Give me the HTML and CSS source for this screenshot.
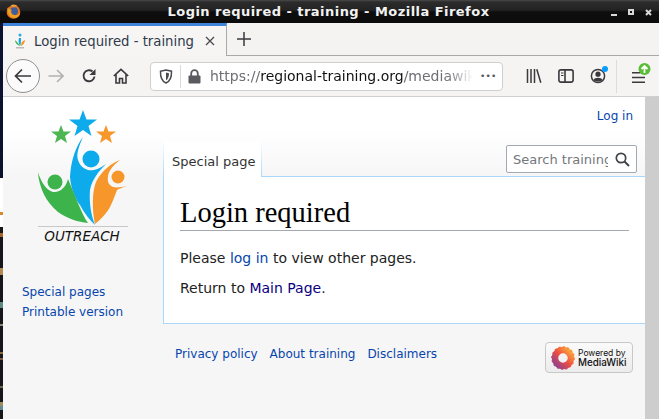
FILE: index.html
```html
<!DOCTYPE html>
<html lang="en">
<head>
<meta charset="utf-8">
<title>Login required - training - Mozilla Firefox</title>
<link rel="stylesheet" href="styles.css">
</head>
<body>
<div class="window">
  <header class="titlebar">
    <svg class="ff-logo" width="15" height="15" viewBox="0 0 16 16"><circle cx="8" cy="8.500" r="7.300" fill="#e8741c"/><circle cx="8.600" cy="7.600" r="4.200" fill="#3d5f9e"/><path d="M1.500 4c0 5 2 11 7.500 11 3 0 5.500-2 6-6C13 12 10 12.500 8 11.500 5.500 10.500 5 8 6 6 4 6 3 5 1.500 4z" fill="#f0a020"/><path d="M5 1.500c2-1.500 6-1 8 1.500-2-1-4-.5-5 .5z" fill="#e9a23a"/></svg>
    <div class="title">Login required - training - Mozilla Firefox</div>
    <div class="winbtns">
      <span class="wb-min"></span><span class="wb-max"></span>
      <svg width="7" height="7" viewBox="0 0 7 7"><path d="M1 1l5 5M6 1L1 6" stroke="#d8d8d8" stroke-width="2"/></svg>
    </div>
  </header>
  <div class="frame">
    <div class="tabbar">
      <div class="tab">
        <svg class="favicon" width="14" height="16" viewBox="0 0 14 16"><circle cx="7" cy="2" r="1.500" fill="#2aa7e0"/><path d="M6 5c-1 3 0 6 1 8 1-1 1-5 1-8z" fill="#1ba6e6"/><path d="M2 7c0 3 2 5 5 6-1-2-3-4-5-6z" fill="#3db54a"/><path d="M12 7c-3 1-4 3-4 6 2-1 4-3 4-6z" fill="#f7941d"/><rect x="3" y="14" width="8" height="1.500" fill="#bbb"/></svg>
        <span class="tab-label">Login required - training</span>
        <svg class="tab-close" width="10" height="10" viewBox="0 0 10 10"><path d="M1 1l8 8M9 1L1 9" stroke="#4a4a4f" stroke-width="1.300"/></svg>
      </div>
      <div class="newtab"><svg width="14" height="14" viewBox="0 0 14 14"><path d="M7 0v14M0 7h14" stroke="#3a3a3e" stroke-width="1.500"/></svg></div>
    </div>
    <nav class="navbar">
      <div class="backbtn"><svg width="18" height="16" viewBox="0 0 18 16"><path d="M8 1.500 1.500 8 8 14.500M2 8h15" fill="none" stroke="#3a3a3e" stroke-width="1.700"/></svg></div>
      <svg class="ic-forward" width="16" height="14" viewBox="0 0 16 14"><path d="M9 1l6 6-6 6M14.500 7H.5" fill="none" stroke="#b1b1b3" stroke-width="1.600"/></svg>
      <svg class="ic-reload" width="16" height="16" viewBox="0 0 16 16"><path d="M13.500 8.500A5.500 5.500 0 1 1 11.500 3.500" fill="none" stroke="#3a3a3e" stroke-width="1.900"/><path d="M14.500 1v6h-6z" fill="#3a3a3e"/></svg>
      <svg class="ic-home" width="16" height="16" viewBox="0 0 16 16"><path d="M.8 8 8 1.300 15.200 8M3 6.500V15h3.500v-4.500h3V15H13V6.500" fill="none" stroke="#3a3a3e" stroke-width="1.600"/></svg>
      <div class="urlbar">
        <svg class="ic-shield" width="14" height="15" viewBox="0 0 14 15"><path d="M1.500 2.200 7 1l5.500 1.200c.2 5-1 9.800-5.500 11.800-4.500-2-5.700-6.800-5.500-11.800z" fill="none" stroke="#4a4a4f" stroke-width="1.500"/><path d="M7 3.500 10 4.200C10 7.500 9 10 7 11.500z" fill="#4a4a4f"/></svg>
        <span class="url-sep"></span>
        <svg class="ic-lock" width="13" height="15" viewBox="0 0 13 15"><path d="M3.200 7V4.500a3.300 3.300 0 0 1 6.600 0V7" fill="none" stroke="#5b5b5f" stroke-width="1.800"/><rect x=".5" y="6.500" width="12" height="8" rx="1" fill="#5b5b5f"/></svg>
        <span class="url"><span class="url-dim">https://</span>regional-training.org<span class="url-dim">/mediawiki</span></span>
        <span class="url-more">•••</span>
      </div>
      <div class="nav-right">
        <svg class="ic-lib" width="16" height="14" viewBox="0 0 16 14"><path d="M1.500 0v14M5 0v14M8.500 0v14M10.800.3l4 13.400" fill="none" stroke="#3a3a3e" stroke-width="1.500"/></svg>
        <svg class="ic-side" width="16" height="14" viewBox="0 0 16 14"><rect x=".9" y=".9" width="14.200" height="12.200" rx="2" fill="none" stroke="#3a3a3e" stroke-width="1.600"/><path d="M7 1v12" stroke="#3a3a3e" stroke-width="1.600"/><path d="M3 4h2.500M3 6.500h2.500" stroke="#3a3a3e"/></svg>
        <svg class="ic-acct" width="19" height="18" viewBox="0 0 19 18"><circle cx="8" cy="10" r="6.600" fill="none" stroke="#3a3a3e" stroke-width="1.500"/><circle cx="8" cy="8.200" r="2.600" fill="#3a3a3e"/><path d="M3.500 14c1-3 8-3 9 0-2 2-7 2-9 0z" fill="#3a3a3e"/><circle cx="15" cy="3" r="3" fill="#0a9dff"/></svg>
        <span class="nav-sep"></span>
        <svg class="ic-menu" width="20" height="22" viewBox="0 0 20 22"><path d="M0 9.800h8M0 14.500h13M0 19.200h13" stroke="#3a3a3e" stroke-width="1.600"/><circle cx="12.500" cy="6" r="6" fill="#57bd35"/><path d="M12.500 10V3M9.500 6l3-3 3 3" fill="none" stroke="#fff" stroke-width="1.800"/></svg>
      </div>
    </nav>
    <div class="viewport">
      <div class="page">
        <aside class="sidebar">
          <svg class="logo" width="96" height="134" viewBox="0 0 96 134">
            <polygon points="45,0 48.500,9.500 59,9.500 50.500,16 53.500,26 45,20 36.500,26 39.500,16 31,9.500 41.500,9.500" fill="#0dabec"/>
            <polygon points="23,15 25.500,21.500 33,21.500 27,26 29,33 23,29 17,33 19,26 13,21.500 20.500,21.500" fill="#4eb553"/>
            <polygon points="68,15 70.500,21.500 78,21.500 72,26 74,33 68,29 62,33 64,26 58,21.500 65.500,21.500" fill="#f7962a"/>
            <circle cx="53" cy="49" r="8.500" fill="#0dabec"/>
            <circle cx="17" cy="72" r="7.500" fill="#3cb44b"/>
            <circle cx="80" cy="67" r="6.500" fill="#f7962a"/>
            <path d="M45 27C38 36 33 50 32 67 33 80 38 90 42 95 46 103 52 110 57 115 53 105 51 92 52 80 54 70 60 62 68 54 60 60 54 61 50 60 45 58 42 56 40 50 38 44 41 36 45 27z" fill="#0dabec"/>
            <path d="M0 62C1 78 8 92 20 102 30 109 40 112 50 113 44 105 37 85 30 69 28 77 22 83 15 82 8 80 3 72 0 62z" fill="#3cb44b"/>
            <path d="M82 50C74 53 64 60 58 72 54 82 54 100 57 114 64 108 69 103 72 97 75 91 77 85 79 80 82 78 86 77 89 76 84 77 79 78 75 77 71 75 69 72 70 67 70 62 74 56 82 50z" fill="#f7962a"/>
            <rect x="0" y="116" width="90" height="1" fill="#c8c8c8"/>
            <text class="logo-text" x="44" y="131" text-anchor="middle">OUTREACH</text>
          </svg>
          <ul class="tools">
            <li><a href="#">Special pages</a></li>
            <li><a href="#">Printable version</a></li>
          </ul>
        </aside>
        <div class="main">
          <div class="personal"><a href="#">Log in</a></div>
          <div class="tabs-row">
            <div class="special-tab">Special page</div>
            <div class="search"><span class="search-text">Search training</span>
              <svg width="15" height="15" viewBox="0 0 15 15"><circle cx="6" cy="6" r="4.700" fill="none" stroke="#404448" stroke-width="1.700"/><path d="M9.500 9.500 14 14" stroke="#404448" stroke-width="2"/></svg>
            </div>
          </div>
          <main class="content">
            <h1>Login required</h1>
            <p>Please <a href="#">log in</a> to view other pages.</p>
            <p>Return to <a class="visited" href="#">Main Page</a>.</p>
          </main>
          <footer class="footer">
            <div class="foot-links"><a href="#">Privacy policy</a><a href="#">About training</a><a href="#">Disclaimers</a></div>
            <div class="badge">
              <svg width="24" height="24" viewBox="0 0 24 24"><defs><linearGradient id="mw" x1="1" y1="0" x2="0" y2="1"><stop offset="0" stop-color="#fdb03c"/><stop offset=".5" stop-color="#ee4e40"/><stop offset="1" stop-color="#8a3f96"/></linearGradient></defs><circle cx="12" cy="12" r="8" fill="none" stroke="url(#mw)" stroke-width="6.500"/><circle cx="12" cy="12" r="10.800" fill="none" stroke="url(#mw)" stroke-width="2" stroke-dasharray="2 2.200"/></svg>
              <div class="badge-text"><span class="pb">Powered by</span><span class="mw">MediaWiki</span></div>
            </div>
          </footer>
        </div>
      </div>
      <div class="scrollbar"></div>
    </div>
  </div>
</div>
</body>
</html>
```
FILE: styles.css
```css
* { box-sizing: border-box; }
html, body { margin: 0; padding: 0; width: 659px; height: 419px; overflow: hidden; }
body {
  font-family: "DejaVu Sans", sans-serif;
  background: linear-gradient(#0b1230 0 178px, #fff 178px 212px, #d9892c 212px 215px, #fff 215px 227px, #15171a 227px 233px, #a8652a 233px 237px, #15171a 237px 268px, #b08a50 268px 275px, #15171a 275px 302px, #5f8a80 302px 308px, #15171a 308px 324px, #8a8a7a 324px 326px, #15171a 326px 352px, #8a6a3a 352px 354px, #15171a 354px 358px, #7a5a3a 358px 360px, #15171a 360px 386px, #6a6a4a 386px 388px, #15171a 388px 402px, #a08a60 402px 406px, #5f8a90 406px 410px, #15171a 410px);
}
a { text-decoration: none; color: #0645ad; }

.window { display: flex; flex-direction: column; height: 419px; }

.titlebar { height: 23px; flex: none; display: flex; align-items: center; padding: 0 0 0 6px;
  background: linear-gradient(#4a4a4a 0, #2c2c2c 2px, #232323 10px, #0e0e0e 12px, #0c0c0c 100%); }
.ff-logo { flex: none; }
.title { flex: 1; text-align: center; color: #f2f2f2; font-weight: bold; font-size: 13px; letter-spacing: .46px; padding-left: 25px; white-space: nowrap; margin-top: -1px; }
.winbtns { flex: none; display: flex; align-items: center; gap: 11px; width: 48px; padding-top: 1px; }
.wb-min { width: 6px; height: 2px; background: #d8d8d8; margin-top: 5px; }
.wb-max { width: 6px; height: 6px; border: 2px solid #d8d8d8; }

.frame { flex: 1; margin-left: 3px; display: flex; flex-direction: column; min-height: 0; background: #f5f5f4; }

.tabbar { height: 33px; flex: none; display: flex; background: #f4f3f2; border-bottom: 1px solid #a9a9a9; }
.tab { width: 224px; height: 33px; background: #f6f5f4; border-top: 3px solid #3d83d9; border-right: 1px solid #a9a9a9; display: flex; align-items: center; padding: 0 11px 0 10px; margin-bottom: -1px; }
.favicon { flex: none; }
.tab-label { font-size: 13.250px; color: #2f3a4a; margin-left: 7px; white-space: nowrap; flex: 1; }
.tab-close { flex: none; }
.newtab { width: 34px; display: flex; align-items: center; justify-content: center; padding-right: 1px; }

.navbar { height: 41px; flex: none; display: flex; align-items: center; background: #f5f4f3; border-bottom: 1px solid #d2d0ce; padding-left: 3px; }
.backbtn { width: 34px; height: 34px; border-radius: 50%; border: 1px solid #8f8f8f; background: #fbfbfb; display: flex; align-items: center; justify-content: center; flex: none; }
.ic-forward { margin-left: 8px; flex: none; }
.ic-reload { margin-left: 17px; flex: none; }
.ic-home { margin-left: 16px; flex: none; }
.urlbar { margin-left: 21px; width: 353px; height: 29px; flex: none; background: #fff; border: 1px solid #cfcfcf; border-radius: 4px; display: flex; align-items: center; padding-left: 8px; overflow: hidden; }
.ic-shield { flex: none; }
.url-sep { width: 1px; height: 23px; background: #d9d9d9; margin-left: 7px; flex: none; }
.ic-lock { margin-left: 7px; flex: none; }
.url { margin-left: 9px; font-size: 14px; color: #111; white-space: nowrap; width: 263px; overflow: hidden; flex: none; -webkit-mask-image: linear-gradient(to right, #000 90%, transparent 100%); mask-image: linear-gradient(to right, #000 90%, transparent 100%); }
.url-dim { color: #6e6e73; }
.url-more { color: #55555a; font-size: 9px; letter-spacing: .2px; margin-left: 7px; flex: none; }
.nav-right { display: flex; align-items: center; flex: none; margin-left: 23px; }
.ic-lib { flex: none; }
.ic-side { margin-left: 16px; flex: none; }
.ic-acct { margin-left: 16px; margin-top: -3px; flex: none; }
.nav-sep { width: 1px; height: 33px; background: #dcdcdc; margin-left: 7px; flex: none; }
.ic-menu { margin-left: 15px; margin-top: -5px; flex: none; }

.viewport { flex: 1; display: flex; min-height: 0; }
.page { flex: 1; min-width: 0; display: flex; background: linear-gradient(#fff 32px, #f6f6f6 80px); }
.scrollbar { width: 14px; flex: none; background: #cdcdcd; }

.sidebar { width: 160px; flex: none; display: flex; flex-direction: column; }
.logo { margin: 13px 0 0 35px; flex: none; display: block; }
.logo-text { font-family: "DejaVu Sans", sans-serif; font-size: 13.500px; font-style: italic; fill: #111; }
.tools { list-style: none; margin: 38px 0 0 19px; padding: 0; font-size: 12px; line-height: 20px; }

.main { flex: 1; min-width: 0; display: flex; flex-direction: column; }
.personal { height: 44px; padding: 12px 12px 0 0; text-align: right; font-size: 12px; line-height: 15px; }
.tabs-row { height: 36px; display: flex; justify-content: space-between; border-bottom: 1px solid #a7d7f9; }
.special-tab { width: 99px; height: 36px; border-style: solid; border-width: 0 1px; border-image: linear-gradient(#fff, #a7d7f9) 1; background: #fff; padding: 11px 0 0 8px; font-size: 13px; line-height: 20px; color: #333; }
.search { width: 131px; height: 28px; margin: 4px 8px 0 0; border: 1px solid #a2a9b1; border-radius: 2px; background: #fff; display: flex; align-items: center; padding-left: 6px; }
.search-text { font-size: 13px; color: #72777d; width: 95px; overflow: hidden; white-space: nowrap; flex: none; }
.search svg { margin-left: 7px; flex: none; }

.content { height: 147px; background: #fff; border-left: 1px solid #a7d7f9; border-bottom: 1px solid #a7d7f9; padding: 18px 16px 0 16px; color: #222; font-size: 14px; }
h1 { font-family: "Liberation Serif", serif; font-weight: normal; font-size: 28.500px; line-height: 36px; color: #000; margin: 0 0 18px; border-bottom: 1px solid #a2a9b1; height: 36px; }
.content p { margin: 0 0 11px; line-height: 19px; }
.visited { color: #0b0080; }

.footer { display: flex; justify-content: space-between; padding: 18px 0 0 12px; }
.foot-links { display: flex; gap: 12px; font-size: 12px; line-height: 22px; margin-top: 1px; }
.badge { width: 88px; height: 31px; margin-right: 12px; border: 1px solid #c8c8c8; border-radius: 4px; background: linear-gradient(#fafafa, #ececec); display: flex; align-items: center; padding-left: 5px; gap: 3px; flex: none; }
.badge-text { display: flex; flex-direction: column; font-family: "Inter", "Liberation Sans", sans-serif; color: #111; line-height: 10px; }
.pb { font-size: 8.500px; }
.mw { font-size: 9.800px; font-weight: 500; }
```
